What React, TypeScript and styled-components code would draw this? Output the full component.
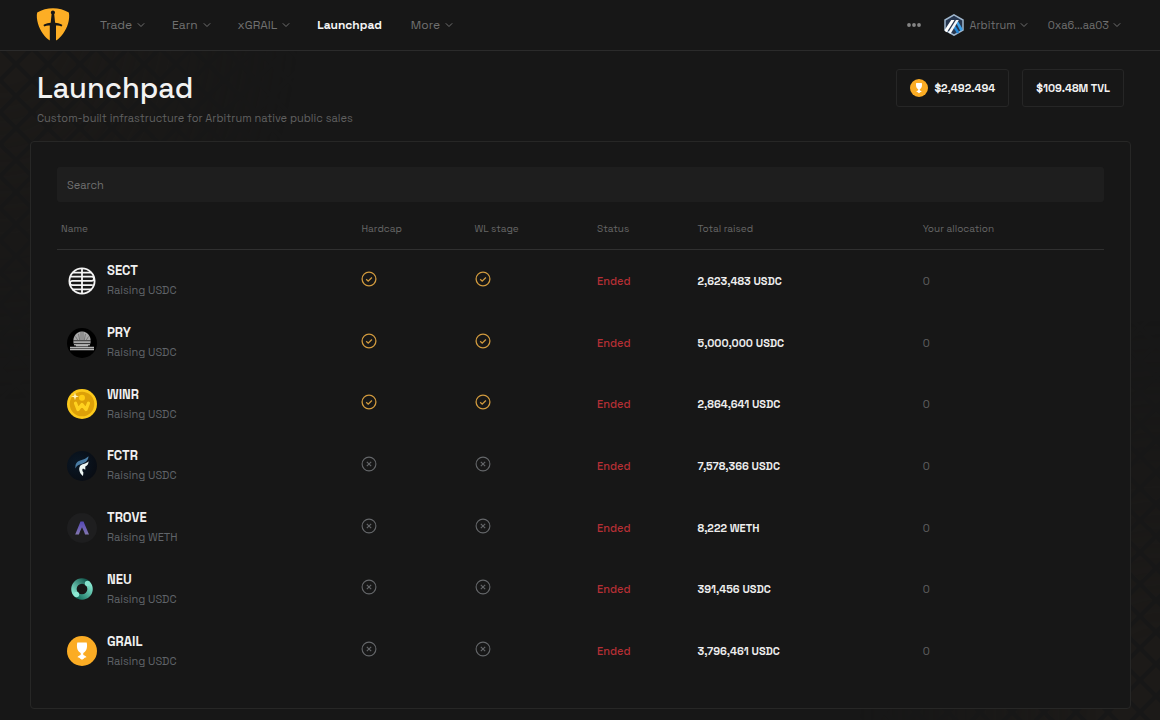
import React from "react";
import styled, { createGlobalStyle } from "styled-components";

const GlobalStyle = createGlobalStyle`
  * { box-sizing: border-box; }
  body {
    margin: 0;
    background: #171717;
    color: #f2f2f2;
    font-family: "Space Grotesk", Inter, "Liberation Sans", sans-serif;
    font-size: 12px;
    line-height: 16px;
  }
`;

const Page = styled.div`
  position: relative;
  min-height: 100vh;
  overflow: hidden;
`;

const Pattern = styled.svg<{ $corner: "start" | "end" }>`
  position: absolute;
  z-index: -1;
  width: 420px;
  height: 520px;
  ${(p) => (p.$corner === "start" ? "top: 0; left: 0;" : "bottom: 0; right: 0;")}
  mask-image: radial-gradient(
    ellipse 300px 400px at ${(p) => (p.$corner === "start" ? "0 0" : "100% 100%")},
    #000 20%,
    transparent 100%
  );
`;

const Header = styled.header`
  display: flex;
  align-items: center;
  justify-content: space-between;
  height: 51px;
  padding: 0 39px 0 36px;
  background: #171717;
  border-bottom: 1px solid #2b2b2b;
`;

const HeaderGroup = styled.div<{ $gap: number }>`
  display: flex;
  align-items: center;
  gap: ${(p) => p.$gap}px;
`;

const LogoLink = styled.a`
  display: flex;
`;

const Nav = styled.nav`
  display: flex;
  align-items: center;
  gap: 27px;
`;

const MenuButton = styled.button<{ $small?: boolean }>`
  display: flex;
  align-items: center;
  gap: ${(p) => (p.$small ? 4 : 5)}px;
  padding: 0;
  border: 0;
  background: none;
  color: #707070;
  font: inherit;
  font-size: ${(p) => (p.$small ? 11 : 12)}px;
  cursor: pointer;
`;

const MenuIcon = styled.span`
  display: flex;
  margin-right: 2px;
`;

const NavLink = styled.a`
  padding-right: 2px;
  color: #f5f5f5;
  font-weight: 600;
  text-decoration: none;
`;

const Main = styled.main`
  padding: 18px 29px 11px 30px;
`;

const Intro = styled.div`
  display: flex;
  justify-content: space-between;
  align-items: flex-start;
  height: 72px;
  padding: 0 7px;
`;

const Title = styled.h1`
  margin: 0;
  font-size: 29px;
  line-height: 38px;
  font-weight: 500;
`;

const Subtitle = styled.p`
  margin: 3px 0 0;
  color: #606060;
  font-size: 11px;
`;

const Stats = styled.div`
  display: flex;
  gap: 13px;
`;

const Stat = styled.div`
  display: flex;
  align-items: center;
  gap: 6px;
  height: 38px;
  padding: 0 13px;
  border: 1px solid #262626;
  border-radius: 3px;
  background: #171717;
  font-size: 11px;
  font-weight: 700;
`;

const Card = styled.section`
  padding: 25px 26px 26px;
  border: 1px solid #272726;
  border-radius: 4px;
  background: #171717;
`;

const Search = styled.input`
  display: block;
  width: 100%;
  height: 35px;
  padding: 0 10px;
  border: 0;
  border-radius: 3px;
  background: #1e1e1e;
  color: #f2f2f2;
  font: inherit;
  font-size: 11px;
  &::placeholder {
    color: #707070;
    opacity: 1;
  }
`;

const Table = styled.table`
  width: 100%;
  height: 480px;
  table-layout: fixed;
  border-collapse: separate;
  border-spacing: 0;
`;

const Col = styled.col<{ $share?: number }>`
  width: ${(p) => (p.$share ? `${p.$share}%` : "auto")};
`;

const Th = styled.th`
  height: 48px;
  padding: 6px 4px 0;
  border-bottom: 1px solid #303030;
  color: #666;
  font-size: 10px;
  font-weight: 400;
  text-align: left;
`;

const Td = styled.td<{ $tone?: "ended" | "strong" | "muted" }>`
  padding: 0 4px;
  font-size: 11px;
  font-weight: ${(p) => (p.$tone === "strong" ? 700 : p.$tone === "ended" ? 500 : 400)};
  color: ${(p) =>
    p.$tone === "ended" ? "#b52f35" : p.$tone === "strong" ? "#ededed" : "#606060"};
`;

const Token = styled.div`
  display: flex;
  align-items: center;
  gap: 10px;
  padding-left: 6px;
`;

const TokenText = styled.div`
  display: flex;
  flex-direction: column;
  gap: 3px;
  color: #606469;
`;

const TokenName = styled.strong`
  color: #f0f0f0;
  font-size: 13px;
  font-weight: 600;
`;

const Mark = styled.svg`
  display: block;
  margin-bottom: 4px;
`;

function Chevron() {
  return (
    <svg width="8" height="8" viewBox="0 0 8 8" fill="none" stroke="currentColor" aria-hidden="true">
      <path d="M0.8 2.3 4 5.5 7.2 2.3" />
    </svg>
  );
}

function ShieldLogo() {
  return (
    <svg width="34" height="34" viewBox="0 0 34 34" aria-hidden="true">
      <path
        fill="#fdae25"
        d="M17 .3c5.600 0 11.200 1.500 15.800 4.200.4 1.500.5 3.400.3 5.500-.6 7.500-4.300 14.600-9.800 20-1.100 1.100-2.100 1.900-3.300 2.600V17.600c2-.2 3.900.1 5.500 1l.9-1.600c-1.500-1.300-3.500-1.900-5.600-2.100l-1.700-.2-.9-8.600c.5-.3.8-.8.800-1.400a2.100 2.100 0 1 0-4.200 0c0 .6.3 1.100.8 1.400l-.9 8.600-1.700.2c-2.100.2-4.100.8-5.600 2.100l.9 1.600c1.700-.9 3.500-1.200 5.500-1v15c-1.300-.7-2.300-1.600-3.600-2.800C5.300 24.400 1.600 17.500.9 10 .7 7.900.8 6 1.200 4.500 5.800 1.800 11.400.3 17 .3Z"
      />
    </svg>
  );
}

function ArbitrumLogo() {
  return (
    <svg width="20" height="22" viewBox="0 0 20 22" aria-hidden="true">
      <path d="M10 .8 19 6v10l-9 5.200L1 16V6Z" fill="#26364f" stroke="#9fb6cd" strokeWidth="1.500" />
      <path d="M11.800 8.300 14 7.200l4.500 7.600v1.300L16.400 17Z" fill="#3ba0ea" />
      <path d="m10.700 10.800 4.700 7.400-2.300 1.300-3.900-6.200Z" fill="#2386d5" />
      <path d="M7.200 6h3.300L2.800 18.300.8 17v-1.200Z" fill="#fff" />
      <path d="M12 6h2.800L6.600 19.800l-2.400-1.400Z" fill="#f2f6fa" />
    </svg>
  );
}

function GrailLogo({ size = 30 }: { size?: number }) {
  return (
    <svg width={size} height={size} viewBox="0 0 30 30" aria-hidden="true">
      <circle cx="15" cy="15" r="15" fill="#fbac24" />
      <path
        fill="#fff"
        d="M10.300 6.500h9.400c.9 4.200.1 8.300-2.700 10.100-.6.400-.8.700-.8 1.300 0 .8.500 1.100 1.300 1.500 1.300.6 1.900 1.100 1.900 1.900-1.500.5-2.300.6-2.700 1.400L15 23.700l-1.700-1c-.4-.8-1.200-.9-2.700-1.400 0-.8.600-1.300 1.900-1.900.8-.4 1.300-.7 1.300-1.500 0-.6-.2-.9-.8-1.300-2.800-1.800-3.600-5.900-2.700-10.100Z"
      />
    </svg>
  );
}

function SectLogo() {
  return (
    <svg width="30" height="30" viewBox="0 0 30 30" fill="none" stroke="#f4f4f4" strokeWidth="1.800" aria-hidden="true">
      <circle cx="15" cy="15" r="12.600" />
      <path d="M15 2.300v25.400M6 6.600h18M4 10.700h20.500c3.300 0 3.300 4.200 0 4.200H5.500c-3.300 0-3.300 4.200 0 4.200h20.300M5 23.300h19.500" />
    </svg>
  );
}

function PryLogo() {
  return (
    <svg width="30" height="30" viewBox="0 0 30 30" aria-hidden="true">
      <circle cx="15" cy="15" r="15" fill="#000" />
      <path d="M7.300 17.500C4.300 10.500 8.500 3.500 15 3.500s10.700 7 7.700 14Z" fill="#a8a8a8" />
      <path d="M6 12.700h18M6 15.500h18" stroke="#2b2b2b" strokeWidth=".9" />
      <path d="M14 4v8.500M16 4v8.500M11.500 6l1.300 6.500M18.500 6l-1.300 6.500M8.500 8.500l2.500 4M21.500 8.500l-2.500 4" stroke="#555" strokeWidth=".6" />
      <path d="M9 17.700h12M3 19.500h24M3 21.500h24" stroke="#b5b5b5" strokeWidth="1.300" />
    </svg>
  );
}

function WinrLogo() {
  return (
    <svg width="30" height="30" viewBox="0 0 30 30" aria-hidden="true">
      <circle cx="15" cy="15" r="15" fill="#fcc91b" />
      <circle cx="15" cy="15" r="12.300" fill="#dda008" />
      <circle cx="15" cy="8.700" r="3" fill="#ffcc14" />
      <path
        d="M8.500 14.200 11 20.600 15 15.400 19 20.600 21.500 14.200"
        fill="none"
        stroke="#ffd21f"
        strokeWidth="3.200"
        strokeLinecap="round"
        strokeLinejoin="round"
      />
      <path d="m8 3.500.9 3 3 .9-3 .9-.9 3-.9-3-3-.9 3-.9Z" fill="#fff4b8" />
    </svg>
  );
}

function FctrLogo() {
  return (
    <svg width="30" height="30" viewBox="0 0 30 30" aria-hidden="true">
      <defs>
        <radialGradient id="fctr-bg" cx=".35" cy=".4" r=".65">
          <stop offset="0" stopColor="#0a1826" />
          <stop offset="1" stopColor="#090d14" />
        </radialGradient>
      </defs>
      <circle cx="15" cy="15" r="15" fill="url(#fctr-bg)" />
      <path d="M8.500 17.500c-.6-5 1.600-7.200 5.400-8.300 3.200-.9 5.400-1.800 7.600-3.900-.2 4-2.700 6.300-6.500 7.400-3.100.9-5.200 1.700-6.500 4.800Z" fill="#4a7da5" />
      <path d="M12.400 19.500c-.6-4.200 1.200-5.800 4.200-6.600 2.200-.6 3.800-1.200 5-2.600-.1 3-1.400 4.500-3.300 5.200v3.200l-2.300-1.200c-1 .7-1 2.200.4 4.100l-.4 3.300c-2-1.400-3.300-3.200-3.600-5.400Z" fill="#eef7f4" />
    </svg>
  );
}

function TroveLogo() {
  return (
    <svg width="30" height="30" viewBox="0 0 30 30" aria-hidden="true">
      <defs>
        <linearGradient id="trove-mark" x1="0" y1="0" x2="0" y2="1">
          <stop offset="0" stopColor="#5548b8" />
          <stop offset="1" stopColor="#8276ae" />
        </linearGradient>
      </defs>
      <circle cx="15" cy="15" r="15" fill="#1e1e1f" />
      <path d="M13.500 8.500h3l5.500 13h-3.900l-1.200-3.300L15 14.300l-1.900 3.900-1.200 3.300H8.200Z" fill="url(#trove-mark)" />
    </svg>
  );
}

function NeuLogo() {
  return (
    <svg width="30" height="30" viewBox="0 0 30 30" fill="none" strokeWidth="5.400" aria-hidden="true">
      <defs>
        <linearGradient id="neu-a" x1="0" y1="1" x2="1" y2="0">
          <stop offset="0" stopColor="#86e8d0" />
          <stop offset="1" stopColor="#12574c" />
        </linearGradient>
        <linearGradient id="neu-b" x1="1" y1="0" x2="0" y2="1">
          <stop offset="0" stopColor="#86e8d0" />
          <stop offset="1" stopColor="#15705f" />
        </linearGradient>
      </defs>
      <path d="M9.300 20.700A8 8 0 0 1 20.700 9.300" stroke="url(#neu-a)" />
      <path d="M20.700 9.300A8 8 0 0 1 9.300 20.700" stroke="url(#neu-b)" />
      <circle cx="20.500" cy="9.500" r="2.700" fill="#86e2cc" />
      <circle cx="9.500" cy="20.500" r="2.700" fill="#8eead4" />
    </svg>
  );
}

function StageMark({ on }: { on: boolean }) {
  return (
    <Mark width="16" height="16" viewBox="0 0 16 16" fill="none" role="img" aria-label={on ? "Yes" : "No"}
      stroke={on ? "#d19a3e" : "#65676a"} strokeWidth={on ? 1.300 : 1.100}>
      <circle cx="8" cy="8" r="6.900" />
      {on ? <path d="m5.200 8.200 2 2 3.700-3.700" /> : <path d="m5.800 5.800 4.400 4.400M10.200 5.800l-4.400 4.400" />}
    </Mark>
  );
}

const sales = [
  { name: "SECT", unit: "USDC", logo: <SectLogo />, open: true, raised: "2,623,483 USDC" },
  { name: "PRY", unit: "USDC", logo: <PryLogo />, open: true, raised: "5,000,000 USDC" },
  { name: "WINR", unit: "USDC", logo: <WinrLogo />, open: true, raised: "2,864,641 USDC" },
  { name: "FCTR", unit: "USDC", logo: <FctrLogo />, open: false, raised: "7,578,366 USDC" },
  { name: "TROVE", unit: "WETH", logo: <TroveLogo />, open: false, raised: "8,222 WETH" },
  { name: "NEU", unit: "USDC", logo: <NeuLogo />, open: false, raised: "391,456 USDC" },
  { name: "GRAIL", unit: "USDC", logo: <GrailLogo />, open: false, raised: "3,796,461 USDC" },
];

function Menu({ label, icon, small }: { label: string; icon?: React.ReactNode; small?: boolean }) {
  return (
    <MenuButton type="button" $small={small}>
      {icon && <MenuIcon>{icon}</MenuIcon>}
      {label}
      <Chevron />
    </MenuButton>
  );
}

function Diamonds({ corner }: { corner: "start" | "end" }) {
  const id = `diamonds-${corner}`;
  return (
    <Pattern $corner={corner} aria-hidden="true">
      <defs>
        <pattern id={id} width="32" height="32" patternUnits="userSpaceOnUse">
          <path d="M16 3 29 16 16 29 3 16Z M0-13 13 0 0 13-13 0Z M32-13 45 0 32 13 19 0Z M0 19 13 32 0 45-13 32Z M32 19 45 32 32 45 19 32Z" fill="#1c1a18" />
        </pattern>
      </defs>
      <rect width="100%" height="100%" fill={`url(#${id})`} />
    </Pattern>
  );
}

export default function App() {
  return (
    <Page>
      <GlobalStyle />
      <Diamonds corner="start" />
      <Diamonds corner="end" />
      <Header>
        <HeaderGroup $gap={30}>
          <LogoLink href="#" aria-label="Home">
            <ShieldLogo />
          </LogoLink>
          <Nav>
            <Menu label="Trade" />
            <Menu label="Earn" />
            <Menu label="xGRAIL" />
            <NavLink href="#launchpad">Launchpad</NavLink>
            <Menu label="More" />
          </Nav>
        </HeaderGroup>
        <HeaderGroup $gap={20}>
          <MenuButton type="button" aria-label="More options">
            <svg width="18" height="6" viewBox="0 0 18 6" fill="#858585" aria-hidden="true">
              <circle cx="3" cy="3" r="1.900" />
              <circle cx="8" cy="3" r="1.900" />
              <circle cx="13" cy="3" r="1.900" />
            </svg>
          </MenuButton>
          <Menu small label="Arbitrum" icon={<ArbitrumLogo />} />
          <Menu small label="0xa6...aa03" />
        </HeaderGroup>
      </Header>
      <Main>
        <Intro>
          <div>
            <Title>Launchpad</Title>
            <Subtitle>Custom-built infrastructure for Arbitrum native public sales</Subtitle>
          </div>
          <Stats>
            <Stat>
              <GrailLogo size={18} />
              $2,492.494
            </Stat>
            <Stat>$109.48M TVL</Stat>
          </Stats>
        </Intro>
        <Card>
          <Search type="search" placeholder="Search" aria-label="Search" />
          <Table>
            <colgroup>
              <Col $share={28.7} />
              <Col $share={10.8} />
              <Col $share={11.7} />
              <Col $share={9.600} />
              <Col $share={21.5} />
              <Col />
            </colgroup>
            <thead>
              <tr>
                <Th>Name</Th>
                <Th>Hardcap</Th>
                <Th>WL stage</Th>
                <Th>Status</Th>
                <Th>Total raised</Th>
                <Th>Your allocation</Th>
              </tr>
            </thead>
            <tbody>
              {sales.map((sale) => (
                <tr key={sale.name}>
                  <Td>
                    <Token>
                      {sale.logo}
                      <TokenText>
                        <TokenName>{sale.name}</TokenName>
                        <span>Raising {sale.unit}</span>
                      </TokenText>
                    </Token>
                  </Td>
                  <Td><StageMark on={sale.open} /></Td>
                  <Td><StageMark on={sale.open} /></Td>
                  <Td $tone="ended">Ended</Td>
                  <Td $tone="strong">{sale.raised}</Td>
                  <Td $tone="muted">0</Td>
                </tr>
              ))}
            </tbody>
          </Table>
        </Card>
      </Main>
    </Page>
  );
}
